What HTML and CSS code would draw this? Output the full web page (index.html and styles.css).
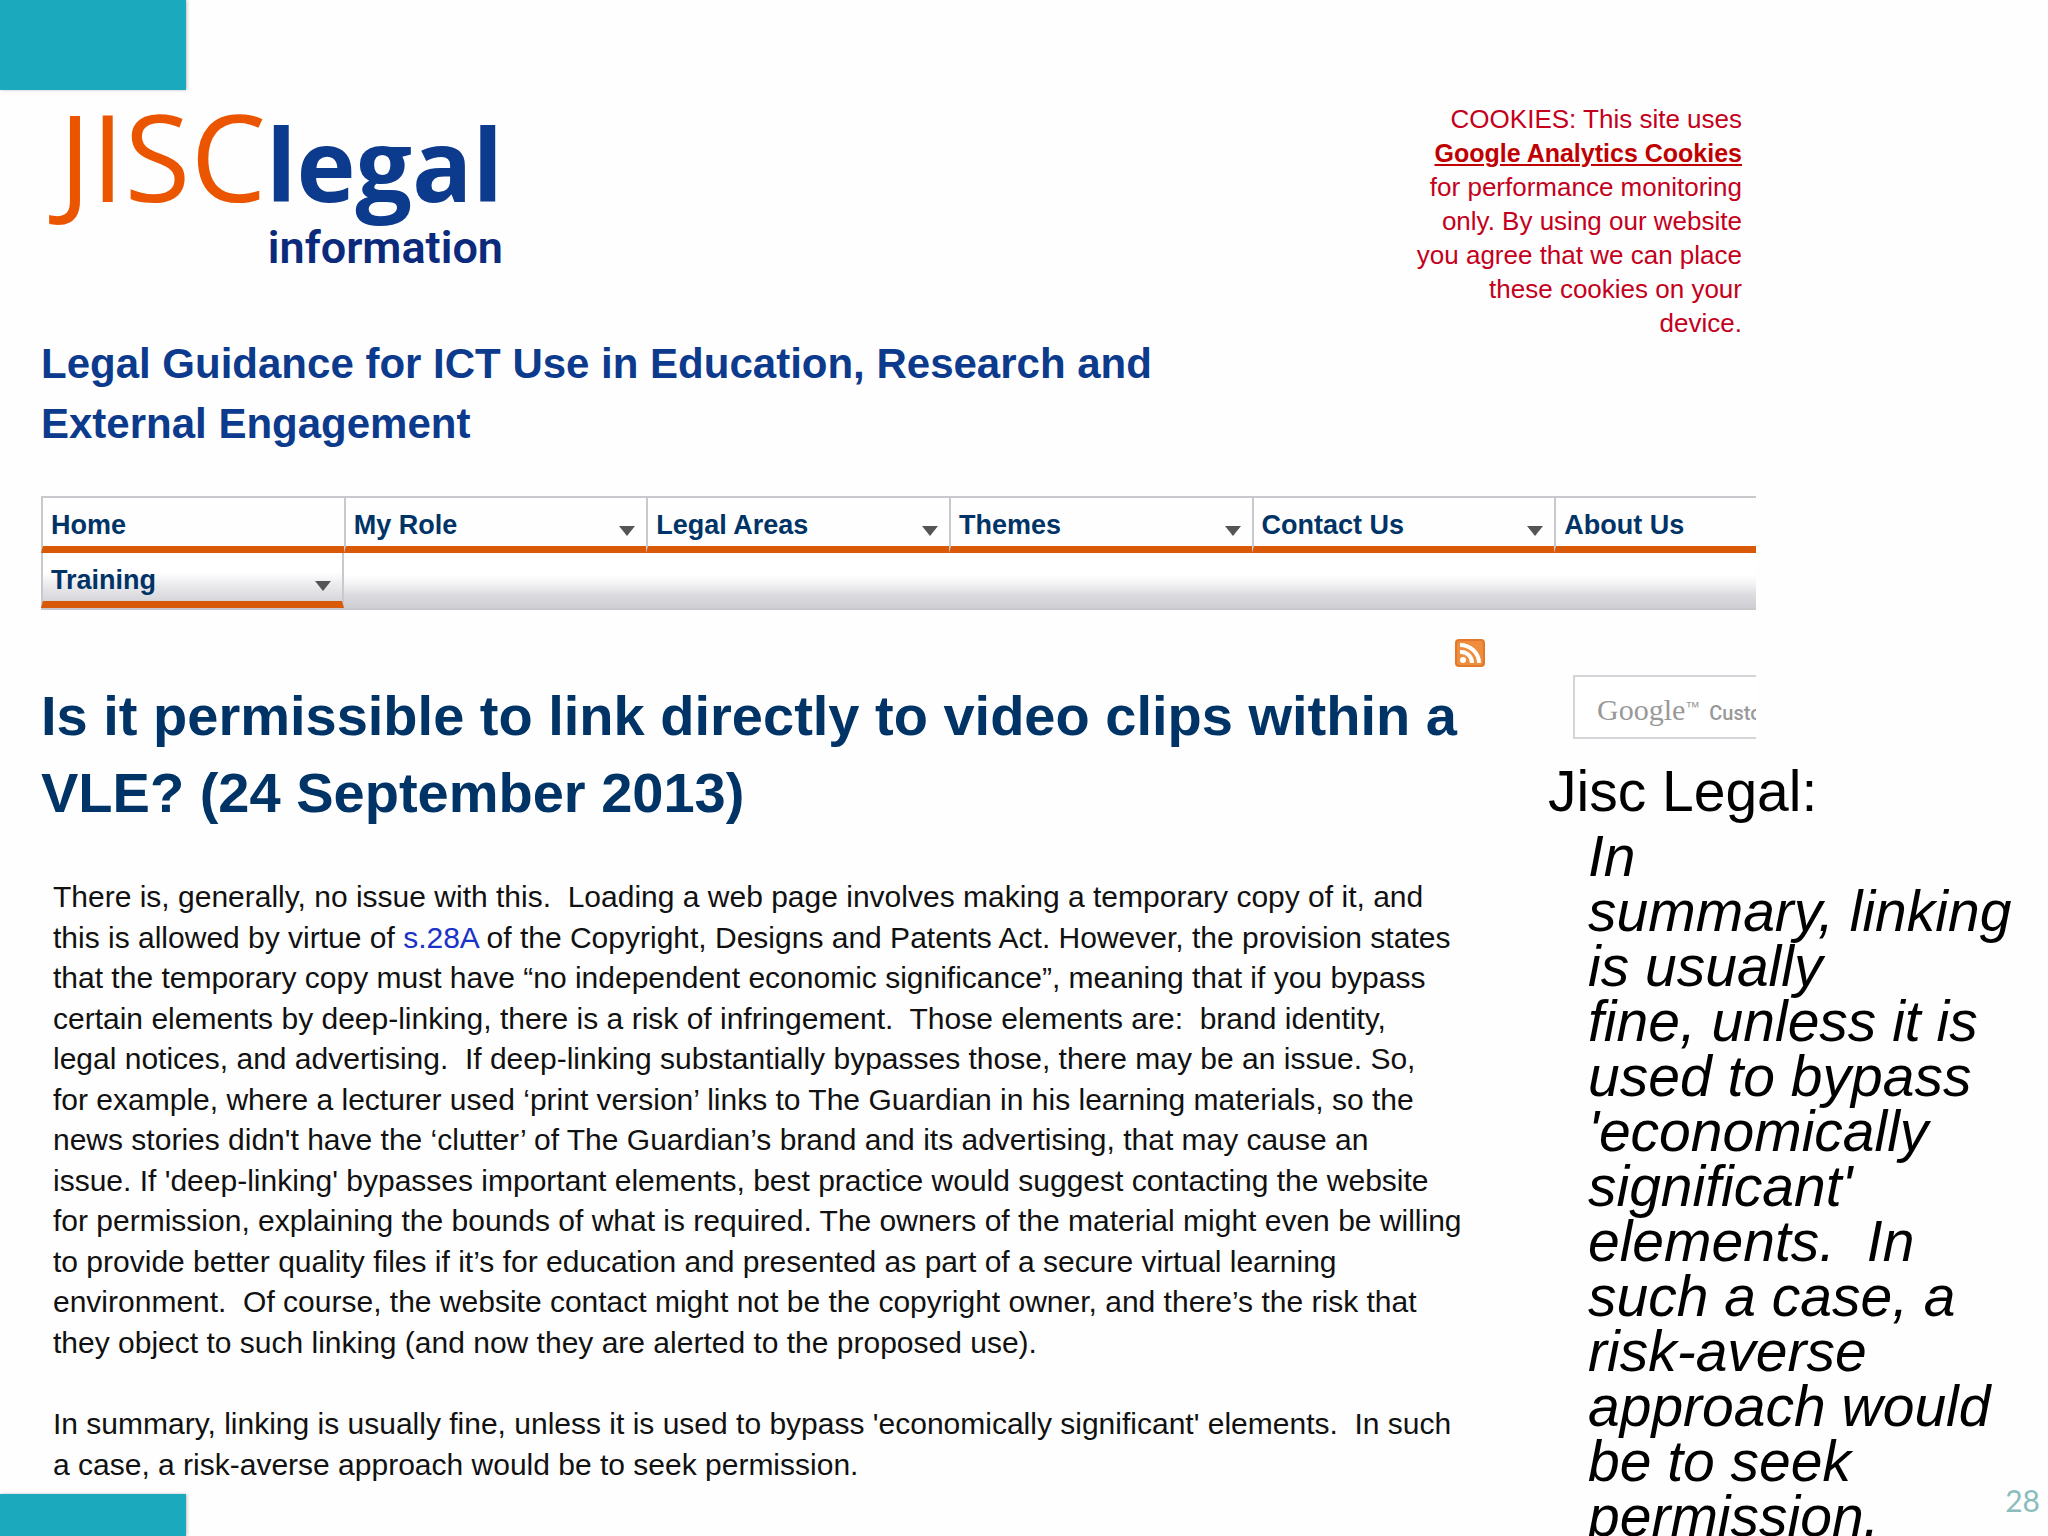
FILE: index.html
```html
<!DOCTYPE html>
<html lang="en">
<head>
  <meta charset="UTF-8" />
  <meta name="viewport" content="width=device-width, initial-scale=1.0" />
  <title>JISC Legal Information</title>
  <link rel="stylesheet" href="styles.css">
</head>
<body>

<div class="slide">
  <div class="band"></div>

  <header class="site-header">
    <div class="brand">
      <div class="logo">
        <div class="logo-name"><span class="logo-jisc">JISC</span><span class="logo-legal">legal</span></div>
        <div class="logo-sub">information</div>
      </div>
      <h2 class="tagline">Legal Guidance for ICT Use in Education, Research and<br>External Engagement</h2>
    </div>
    <p class="cookies">
      COOKIES: This site uses<br>
      <a href="#">Google Analytics Cookies</a><br>
      for performance monitoring<br>
      only. By using our website<br>
      you agree that we can place<br>
      these cookies on your<br>
      device.
    </p>
  </header>

  <nav class="menu">
    <a href="#">Home</a>
    <a href="#" class="has-sub">My Role</a>
    <a href="#" class="has-sub">Legal Areas</a>
    <a href="#" class="has-sub">Themes</a>
    <a href="#" class="has-sub">Contact Us</a>
    <a href="#">About Us</a>
    <a href="#" class="has-sub second-row">Training</a>
  </nav>

  <div class="columns">
    <main class="article">
      <a href="#" class="rss" aria-label="RSS feed">
        <svg viewBox="0 0 30 28" width="30" height="28">
          <rect width="30" height="28" rx="4" fill="#e2782c"/>
          <rect x="2" y="2" width="26" height="24" rx="3" fill="#f08d3c"/>
          <circle cx="8" cy="21" r="3" fill="#fff"/>
          <path d="M5 13a11 11 0 0 1 12 11M5 6a19 18 0 0 1 19 18" fill="none" stroke="#fff" stroke-width="4"/>
        </svg>
      </a>
      <h1>Is it permissible to link directly to video clips within a<br>VLE? (24 September 2013)</h1>
      <div class="article-text">
        <p>
          There is, generally, no issue with this.&nbsp; Loading a web page involves making a temporary copy of it, and<br>
          this is allowed by virtue of <a href="#">s.28A</a> of the Copyright, Designs and Patents Act. However, the provision states<br>
          that the temporary copy must have “no independent economic significance”, meaning that if you bypass<br>
          certain elements by deep-linking, there is a risk of infringement.&nbsp; Those elements are:&nbsp; brand identity,<br>
          legal notices, and advertising.&nbsp; If deep-linking substantially bypasses those, there may be an issue. So,<br>
          for example, where a lecturer used ‘print version’ links to The Guardian in his learning materials, so the<br>
          news stories didn't have the ‘clutter’ of The Guardian’s brand and its advertising, that may cause an<br>
          issue. If 'deep-linking' bypasses important elements, best practice would suggest contacting the website<br>
          for permission, explaining the bounds of what is required. The owners of the material might even be willing<br>
          to provide better quality files if it’s for education and presented as part of a secure virtual learning<br>
          environment.&nbsp; Of course, the website contact might not be the copyright owner, and there’s the risk that<br>
          they object to such linking (and now they are alerted to the proposed use).
        </p>
        <p>
          In summary, linking is usually fine, unless it is used to bypass 'economically significant' elements.&nbsp; In such<br>
          a case, a risk-averse approach would be to seek permission.
        </p>
      </div>
    </main>

    <aside class="side">
      <div class="search">
        <input type="text" id="q">
        <label for="q"><span class="google">Google</span><span class="tm">™</span> Custom Search</label>
      </div>
      <div class="note">
        <p>Jisc Legal:</p>
        <blockquote>In<br>summary, linking<br>is usually<br>fine, unless it is<br>used to bypass<br>'economically<br>significant'<br>elements.&nbsp; In<br>such a case, a<br>risk-averse<br>approach would<br>be to seek<br>permission.</blockquote>
      </div>
    </aside>
  </div>

  <div class="band band-bottom"></div>
  <div class="page-number">28</div>
</div>

</body>
</html>
```

FILE: styles.css
```css
:root {
  --teal: #1ba9bd;
  --orange: #d85a08;
  --jisc-orange: #ec5500;
  --blue: #0c3a8c;
  --navy: #003366;
  --line: #c9c9cd;
}
* {
  box-sizing: border-box;
}
body {
  margin: 0;
  background: #fefefe;
  color: #111;
  font-family: "Liberation Sans", Arial, sans-serif;
}
h1, h2, p, blockquote {
  margin: 0;
}
.slide {
  position: relative;
  height: 100vh;
  overflow: hidden;
}
.band {
  width: 186px;
  height: 90px;
  background: var(--teal);
  box-shadow: 1px 0 3px rgba(0,0,0,0.25);
}
.band-bottom {
  position: absolute;
  left: 0;
  bottom: 0;
  height: 42px;
}
.page-number {
  position: absolute;
  right: 8px;
  bottom: 18px;
  font-family: Lato, sans-serif;
  font-size: 30px;
  line-height: 36px;
  color: #8bbcbd;
}

/* header */
.site-header {
  display: flex;
  justify-content: space-between;
  height: 406px;
  padding: 12px 306px 0 41px;
}
.logo {
  width: 462px;
}
.logo-name {
  display: flex;
  align-items: baseline;
  justify-content: flex-end;
  height: 124px;
  line-height: 108px;
}
.logo-jisc {
  font-family: "Open Sans", sans-serif;
  font-size: 120px;
  font-weight: 500;
  color: var(--jisc-orange);
}
.logo-legal {
  font-family: "Open Sans", sans-serif;
  font-size: 100px;
  font-weight: bold;
  color: var(--blue);
}
.logo-sub {
  font-family: Roboto, sans-serif;
  font-size: 45px;
  line-height: 44px;
  font-weight: 600;
  text-align: right;
  color: #0b2a7c;
}
.tagline {
  margin-top: 64px;
  font-size: 42px;
  line-height: 60px;
  color: var(--blue);
}
.cookies {
  font-size: 26px;
  line-height: 34px;
  text-align: right;
  color: #c4001c;
}
.cookies a {
  color: #c00000;
  font-size: 25px;
  font-weight: bold;
}

/* menu */
.menu {
  display: grid;
  grid-template-columns: repeat(5, 3fr) 2fr;
  grid-template-rows: 55px 55px;
  margin: 0 292px 0 41px;
  border-top: 2px solid var(--line);
  border-bottom: 2px solid var(--line);
  background: linear-gradient(#fff 70%, #f3f3f5 78%, #dcdce0 88%, #cfcfd3);
}
.menu a {
  position: relative;
  padding: 9px 8px 0;
  border-left: 2px solid var(--line);
  border-bottom: 7px solid var(--orange);
  background: #fefefe;
  color: var(--navy);
  font-size: 27px;
  line-height: 36px;
  font-weight: bold;
  text-decoration: none;
}
.menu .has-sub::after {
  content: "";
  position: absolute;
  right: 11px;
  bottom: 10px;
  border: 8px solid transparent;
  border-top: 10px solid #555;
  border-bottom: 0;
}
.menu .second-row {
  border-right: 2px solid var(--line);
  background: linear-gradient(#fff 40%, #ececef 65%, #d6d6da);
}

/* content */
.columns {
  display: grid;
  grid-template-columns: 1fr 500px;
}
.article {
  padding: 29px 63px 0 41px;
}
.rss {
  display: block;
  width: 30px;
  height: 28px;
  margin-left: auto;
}
.rss svg {
  display: block;
}
h1 {
  margin-top: 10px;
  font-size: 56px;
  line-height: 77px;
  color: var(--navy);
  white-space: nowrap;
}
.article-text {
  padding: 46px 0 0 12px;
  font-size: 30px;
  line-height: 1.35;
  white-space: nowrap;
}
.article-text p + p {
  margin-top: 41px;
}
.article-text a {
  color: #1a32c8;
  text-decoration: none;
}

/* right column */
.search {
  position: relative;
  width: 183px;
  height: 64px;
  margin: 65px 0 0 25px;
  overflow: hidden;
}
.search input {
  width: 400px;
  height: 64px;
  border: 2px solid #d5d5d9;
  background: #fff;
}
.search label {
  position: absolute;
  left: 24px;
  top: 0;
  line-height: 64px;
  font-family: Roboto, sans-serif;
  font-size: 20px;
  font-weight: 500;
  color: #999;
  white-space: nowrap;
}
.google {
  font-family: "Liberation Serif", serif;
  font-size: 30px;
  font-weight: normal;
}
.tm {
  margin-right: 4px;
  font-family: "Liberation Sans", Arial, sans-serif;
  font-size: 15px;
  font-weight: normal;
  vertical-align: 8px;
}
.note {
  margin-top: 18px;
  color: #000;
  font-size: 57px;
  white-space: nowrap;
}
.note p {
  line-height: 68px;
}
.note blockquote {
  padding: 4px 0 0 40px;
  font-style: italic;
  line-height: 55px;
}
```
